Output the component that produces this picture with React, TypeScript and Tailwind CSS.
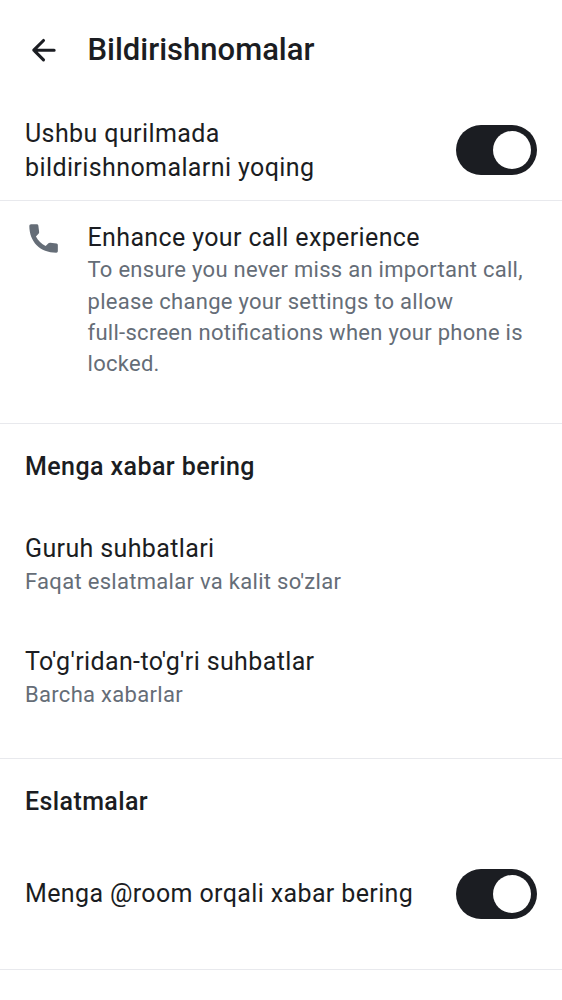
import React from "react";

function Toggle() {
  return (
    <div className="flex h-[50px] w-[81px] shrink-0 items-center justify-end rounded-full bg-[#1b1d22] pr-[6px]">
      <div className="size-[38px] rounded-full bg-white" />
    </div>
  );
}

function Option({ title, value }: { title: string; value: string }) {
  return (
    <div className="h-[113px] px-[25px] pt-[18px]">
      <div className="text-[25px] leading-[34px] tracking-[0.37px]">{title}</div>
      <div className="text-[22px] leading-[31px] tracking-[0.3px] text-[#656d77]">{value}</div>
    </div>
  );
}

export default function App() {
  return (
    <div className="h-[1000px] w-[562px] overflow-hidden bg-white font-['Roboto',sans-serif] text-[#1b1d22] [font-feature-settings:'liga'_1]">
      <header className="flex h-[100px] items-center pl-[25px]">
        <svg className="size-[37px]" viewBox="0 0 24 24" fill="none" stroke="currentColor" strokeWidth="2" strokeLinecap="round" strokeLinejoin="round">
          <path d="M18.9 11.8H5.8M12 5.5l-6.3 6.3 6.3 6.3" />
        </svg>
        <h1 className="ml-[25.5px] text-[31px] leading-[40px] font-medium">Bildirishnomalar</h1>
      </header>
      <section className="flex h-[101px] items-center justify-between border-b border-[#e8e9ed] px-[25px]">
        <div className="pt-px text-[25px] leading-[34px] tracking-[0.4px]">
          Ushbu qurilmada<br />bildirishnomalarni yoqing
        </div>
        <Toggle />
      </section>
      <section className="flex h-[223px] border-b border-[#e8e9ed] pl-[25px] pt-[19px]">
        <svg className="mr-[25.5px] size-[37px] shrink-0" viewBox="0 0 24 24" fill="#656d77">
          <path d="M3.9 2.8H7.7q.8 0 .95.8l.5 4q.15.8-.4 1.35L7.1 10.7C8.5 13.4 10.7 15.5 13.4 16.9l1.8-1.8q.5-.5 1.2-.4l4.1.6q.8.15.8.95v4.1q0 .95-1 .95C9.8 21.3 2.8 14.2 2.8 3.8q0-1 1.1-1z" />
        </svg>
        <div>
          <div className="pt-px text-[25px] leading-[33px] tracking-[0.37px]">Enhance your call experience</div>
          <div className="pt-[0.4px] text-[22px] leading-[31.2px] tracking-[0.28px] whitespace-nowrap text-[#656d77]">
            To ensure you never miss an important call,<br />
            please change your settings to allow<br />
            full-screen notifications when your phone is<br />
            locked.
          </div>
        </div>
      </section>
      <section className="h-[335px] border-b border-[#e8e9ed]">
        <h2 className="h-[90px] px-[25px] pt-[26px] text-[25px] leading-[34px] font-medium tracking-[0.42px]">Menga xabar bering</h2>
        <Option title="Guruh suhbatlari" value="Faqat eslatmalar va kalit so'zlar" />
        <Option title="To'g'ridan-to'g'ri suhbatlar" value="Barcha xabarlar" />
      </section>
      <section className="h-[211px] border-b border-[#e8e9ed]">
        <h2 className="h-[90px] px-[25px] pt-[26px] text-[25px] leading-[34px] font-medium tracking-[0.4px]">Eslatmalar</h2>
        <div className="flex h-[90px] items-center justify-between px-[25px]">
          <div className="text-[25px] leading-[34px] tracking-[0.37px]">Menga @room orqali xabar bering</div>
          <Toggle />
        </div>
      </section>
    </div>
  );
}
